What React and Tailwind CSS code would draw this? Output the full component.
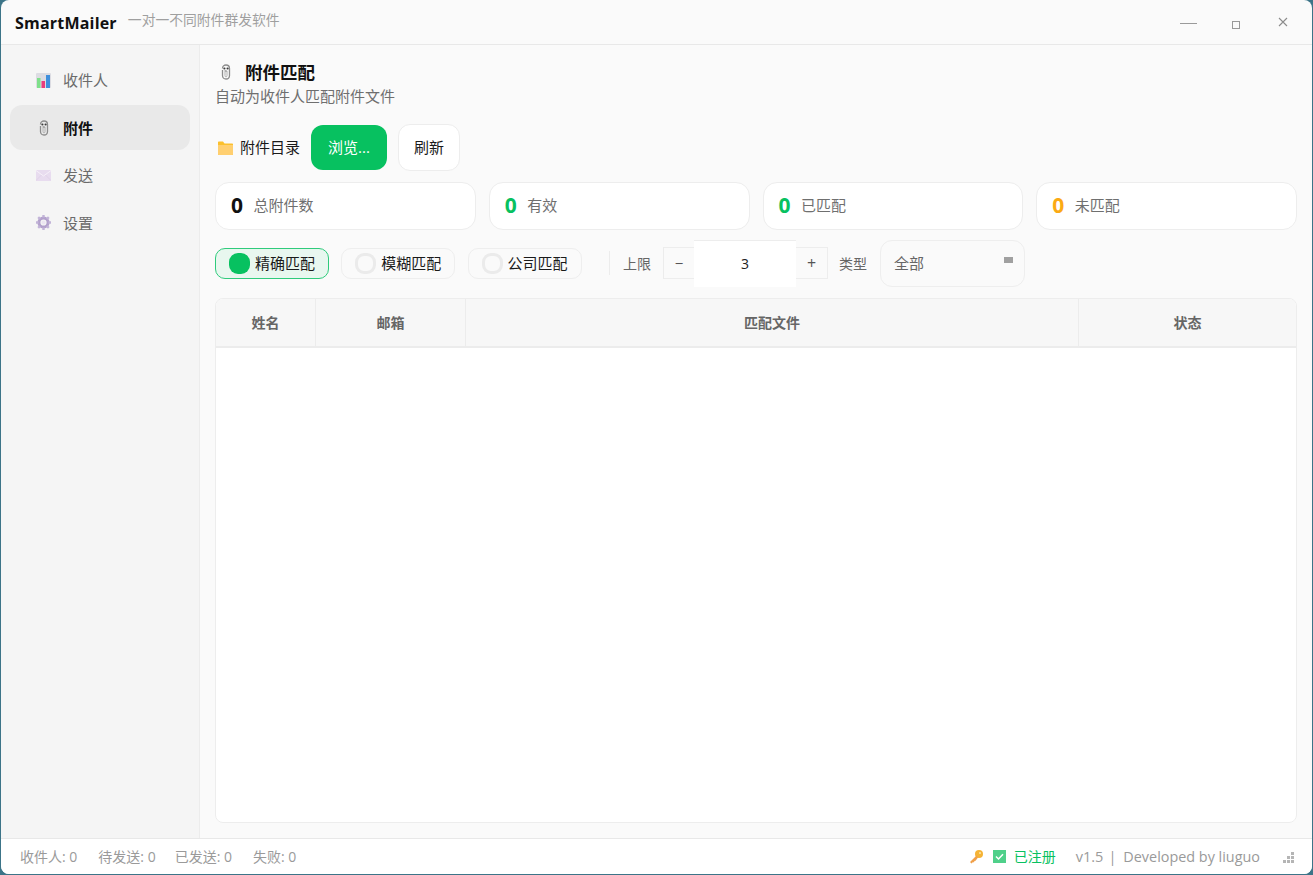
import React from 'react';

const font = { fontFamily: '"Open Sans", "Noto Sans CJK SC", sans-serif' };

function ChartIcon() {
  return (
    <svg width="15" height="15" viewBox="0 0 15 15">
      <rect width="15" height="15" rx="1" fill="#dcdce2" />
      <rect x="1" y="5" width="3.5" height="10" fill="#7fe08a" />
      <rect x="5.5" y="8" width="3.5" height="7" fill="#ea3d7c" />
      <rect x="10" y="2" width="4" height="13" fill="#3f8fdc" />
    </svg>
  );
}

function ClipIcon() {
  return (
    <svg width="10" height="16" viewBox="0 0 10 16" fill="none">
      <path d="M1.5 4.5C1.5 2.2 3 1 5 1s3.5 1.2 3.5 3.5v7C8.500 13.700 7 15 5 15s-3.500-1.300-3.500-3.500V6" stroke="#8d8d8d" strokeWidth="1.3" />
      <path d="M4 6v5.500c0 .9.400 1.400 1 1.400s1-.5 1-1.400V7" stroke="#b0b0b0" strokeWidth="1" />
      <circle cx="3.400" cy="4.500" r="1.100" fill="#3c3c3c" />
      <circle cx="6.600" cy="4.500" r="1.100" fill="#3c3c3c" />
      <circle cx="5" cy="7" r=".7" fill="#6a6a6a" />
    </svg>
  );
}

function MailIcon() {
  return (
    <svg width="15" height="11" viewBox="0 0 15 11">
      <rect width="15" height="11" fill="#e8dcef" />
      <path d="M0 .5 7.500 6 15 .5" fill="none" stroke="#f6f0f8" strokeWidth="1" />
      <path d="M0 10.500 5.500 5M15 10.500 9.500 5" fill="none" stroke="#dccfe6" strokeWidth=".7" />
    </svg>
  );
}

function GearIcon() {
  return (
    <svg width="15" height="15" viewBox="0 0 15 15">
      <circle cx="7.500" cy="7.500" r="4.600" fill="none" stroke="#b3a1cc" strokeWidth="3" />
      <g stroke="#c2b4d8" strokeWidth="2.400">
        <path d="M7.500 0v2.500M7.500 12.500V15M0 7.500h2.500M12.500 7.500H15M2.200 2.200l1.800 1.800M11 11l1.800 1.800M12.800 2.200 11 4M4 11l-1.800 1.800" />
      </g>
      <circle cx="7.500" cy="7.500" r="2" fill="#ece6f2" />
    </svg>
  );
}

function FolderIcon() {
  return (
    <svg width="15" height="14" viewBox="0 0 15 14">
      <path d="M0 1.500C0 .9.400.5 1 .5h4l1.500 2H14c.6 0 1 .4 1 1V13c0 .6-.4 1-1 1H1c-.6 0-1-.4-1-1z" fill="#fbc02d" />
      <path d="M0 4h15v9c0 .6-.4 1-1 1H1c-.6 0-1-.4-1-1z" fill="#ffcf70" />
    </svg>
  );
}

function KeyIcon() {
  return (
    <svg width="15" height="15" viewBox="0 0 15 15">
      <circle cx="10" cy="5" r="4" fill="#f5b335" />
      <circle cx="11" cy="4" r="1" fill="#fde6a8" />
      <path d="M7.500 6.500 1 13l1.500 1.500L4 13l1 .4.400-1.400 1.200-.3L9 8.500z" fill="#f0a04a" />
    </svg>
  );
}

function CheckIcon() {
  return (
    <svg width="13" height="13" viewBox="0 0 13 13">
      <rect width="13" height="13" fill="#4fd08a" />
      <path d="M3 6.500 5.500 9 10 4.200" fill="none" stroke="#fff" strokeWidth="1.500" />
    </svg>
  );
}

function NavItem({ icon, label, active }) {
  return (
    <div className={`flex h-[45px] items-center rounded-xl pl-[26px] text-[15px] ${active ? 'bg-[#e9e9e9] font-bold text-[#111111]' : 'text-[#6b6b6b]'}`}>
      <span className="flex w-[15px] justify-center">{icon}</span>
      <span className="ml-[12px]">{label}</span>
    </div>
  );
}

function StatCard({ value, label, color }) {
  return (
    <div className="flex h-12 flex-1 items-center rounded-[14px] border border-[#ededed] bg-white pb-px pl-[15px]">
      <span className={`w-[22.5px] text-[21px] font-bold ${color}`}>{value}</span>
      <span className="text-[15px] text-[#6f6f6f]">{label}</span>
    </div>
  );
}

function RadioChip({ label, active }) {
  return (
    <div className={`flex h-[31px] w-[114px] items-center rounded-[10px] pl-[13px] text-[15px] text-[#1a1a1a] ${active ? 'border-[1.5px] border-[#2fcb7c] bg-[#e8f7ef]' : 'border border-[#eeeeee] bg-[#fafafa]'}`}>
      <span className={`h-[21px] w-[21px] rounded-[9px] ${active ? 'bg-[#07c160]' : 'border-[3px] border-[#ebebeb]'}`} />
      <span className="ml-[5px]">{label}</span>
    </div>
  );
}

function HeaderCell({ className, children }) {
  return (
    <div className={`flex items-center justify-center border-r border-[#ececec] text-[14px] font-bold text-[#666666] last:border-r-0 ${className}`}>
      {children}
    </div>
  );
}

export default function App() {
  return (
    <div className="h-[875px] w-[1313px] overflow-hidden bg-[#3c7488] pl-px" style={font}>
      <div className="flex h-[874px] w-[1311px] flex-col overflow-hidden rounded-[8px] bg-[#fafafa]">
        {/* title bar */}
        <div className="flex h-[45px] shrink-0 items-center border-b border-[#e8e8e8] pl-[14px]">
          <span className="mt-[2px] text-[16px] font-bold tracking-[0.2px] text-[#111111]">SmartMailer</span>
          <span className="ml-[11px] mb-[3px] text-[13.8px] text-[#9f9f9f]">一对一不同附件群发软件</span>
          <div className="ml-auto flex items-center">
            <span className="mt-[3px] h-px w-[17px] bg-[#9a9a9a]" />
            <span className="ml-[35px] mt-[6px] h-2 w-2 border border-[#999999]" />
            <svg className="ml-[38px] mt-[-1px] mr-[24px]" width="10" height="10" viewBox="0 0 10 10">
              <path d="M1 1l8 8M9 1l-8 8" stroke="#8c8c8c" strokeWidth="1.100" />
            </svg>
          </div>
        </div>

        <div className="flex min-h-0 flex-1">
          {/* sidebar */}
          <div className="flex w-[199px] shrink-0 flex-col gap-[2.5px] border-r border-[#ececec] bg-[#f5f5f5] px-[9px] pt-[12.75px]">
            <NavItem icon={<ChartIcon />} label="收件人" />
            <NavItem icon={<ClipIcon />} label="附件" active />
            <NavItem icon={<MailIcon />} label="发送" />
            <NavItem icon={<GearIcon />} label="设置" />
          </div>

          {/* main */}
          <div className="flex min-w-0 flex-1 flex-col pl-[15px] pr-[15px]">
            <div className="mt-[16px] flex h-[22px] items-center pl-[6px]">
              <ClipIcon />
              <span className="ml-[14px] text-[17.5px] font-bold text-[#111111]">附件匹配</span>
            </div>
            <div className="mt-[3px] text-[15px] leading-[20px] text-[#6f6f6f]">自动为收件人匹配附件文件</div>

            <div className="mt-[17px] flex h-[49px] items-center">
              <span className="ml-[3px]"><FolderIcon /></span>
              <span className="ml-[7px] text-[15px] text-[#1a1a1a]">附件目录</span>
              <button className="ml-[11px] h-[45px] w-[76px] rounded-xl bg-[#07c160] text-[15px] text-white">浏览...</button>
              <button className="ml-[11px] h-[47px] w-[62px] rounded-xl border border-[#ededed] bg-white text-[15px] text-[#1a1a1a]">刷新</button>
            </div>

            <div className="mt-[10px] flex gap-[13px]">
              <StatCard value="0" label="总附件数" color="text-[#111111]" />
              <StatCard value="0" label="有效" color="text-[#07c160]" />
              <StatCard value="0" label="已匹配" color="text-[#07c160]" />
              <StatCard value="0" label="未匹配" color="text-[#fbaa14]" />
            </div>

            <div className="mt-[9px] flex h-[48px] items-center">
              <div className="flex gap-[12.25px]">
                <RadioChip label="精确匹配" active />
                <RadioChip label="模糊匹配" />
                <RadioChip label="公司匹配" />
              </div>
              <span className="ml-[27.5px] h-6 w-px bg-[#ececec]" />
              <span className="ml-[13px] text-[14px] text-[#666666]">上限</span>
              <span className="ml-[12px] h-8 w-px bg-[#ececec]" />
              <div className="flex h-8 w-[30px] items-center justify-center border-y border-[#ededed] text-[15px] text-[#555555]">−</div>
              <div className="flex h-[47px] w-[102px] items-center justify-center border-t border-[#ededed] bg-white text-[14px] text-[#222222]">3</div>
              <div className="flex h-8 w-[32px] items-center justify-center border-y border-r border-[#ededed] text-[16px] text-[#555555]">+</div>
              <span className="ml-[11px] text-[14px] text-[#666666]">类型</span>
              <div className="relative ml-[13px] flex h-[47px] w-[145px] items-center rounded-xl border border-[#eeeeee] pl-[13px] text-[15px] text-[#666666]">
                全部
                <span className="absolute right-[11px] top-[16px] h-[6px] w-[9px] bg-[#a0a0a0]" />
              </div>
            </div>

            <div className="mt-[11px] flex h-[525px] flex-col overflow-hidden rounded-lg border border-[#ededed] bg-white">
              <div className="flex h-[49px] shrink-0 border-b-2 border-[#ececec] bg-[#f7f7f7]">
                <HeaderCell className="w-[100px]">姓名</HeaderCell>
                <HeaderCell className="w-[150px]">邮箱</HeaderCell>
                <HeaderCell className="w-[613px]">匹配文件</HeaderCell>
                <HeaderCell className="flex-1">状态</HeaderCell>
              </div>
            </div>
          </div>
        </div>

        {/* status bar */}
        <div className="flex h-[36px] shrink-0 items-center border-t border-[#e8e8e8] bg-white pl-[19px] text-[14px] text-[#9a9a9a]">
          <span>收件人: 0</span>
          <span className="ml-[21px]">待发送: 0</span>
          <span className="ml-[19px]">已发送: 0</span>
          <span className="ml-[21px]">失败: 0</span>
          <span className="ml-auto"><KeyIcon /></span>
          <span className="ml-[9px]"><CheckIcon /></span>
          <span className="ml-[8px] text-[#07c160]">已注册</span>
          <span className="ml-[20px] text-[14.5px]">v1.5</span>
          <span className="ml-[5px] text-[14.5px]">|</span>
          <span className="ml-[7px] text-[14.4px]">Developed by liuguo</span>
          <svg className="ml-[23px] mr-[18px] mt-[2px]" width="11" height="11" viewBox="0 0 11 11" fill="#b5b5b5">
            <rect x="8" y="0" width="3" height="3" />
            <rect x="4" y="4" width="3" height="3" />
            <rect x="8" y="4" width="3" height="3" />
            <rect x="0" y="8" width="3" height="3" />
            <rect x="4" y="8" width="3" height="3" />
            <rect x="8" y="8" width="3" height="3" />
          </svg>
        </div>
      </div>
    </div>
  );
}
